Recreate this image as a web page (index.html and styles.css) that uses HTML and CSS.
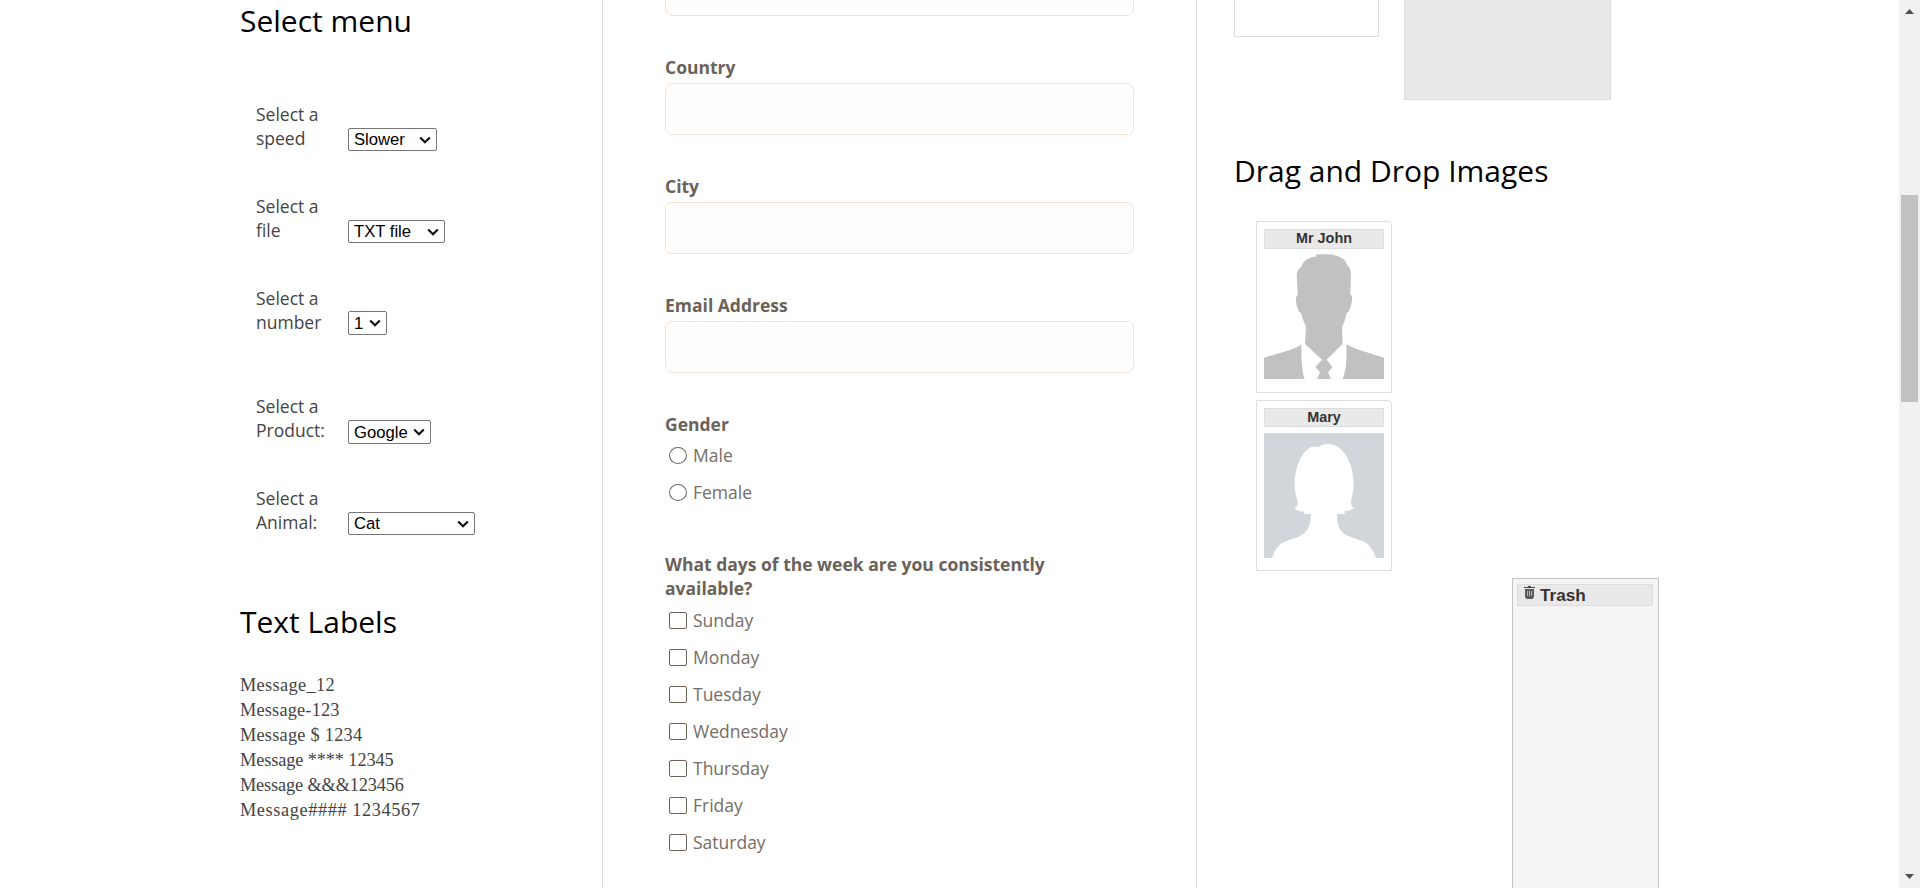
FILE: index.html
```html
<!DOCTYPE html>
<html lang="en">
<head>
<meta charset="utf-8">
<title>Practice form</title>
<link rel="stylesheet" href="styles.css">
</head>
<body>
<div class="page">
  <section class="column column-menus">
    <h2 class="heading">Select menu</h2>
    <div class="menus">
      <div class="menu-row"><label class="menu-label" for="speed">Select a speed</label><select class="menu menu-speed" id="speed"><option>Slower</option></select></div>
      <div class="menu-row"><label class="menu-label" for="file">Select a file</label><select class="menu menu-file" id="file"><option>TXT file</option></select></div>
      <div class="menu-row menu-row-last"><label class="menu-label" for="number">Select a number</label><select class="menu menu-number" id="number"><option>1</option></select></div>
      <div class="menu-row"><label class="menu-label" for="product">Select a Product:</label><select class="menu menu-product" id="product"><option>Google</option></select></div>
      <div class="menu-row"><label class="menu-label" for="animal">Select a Animal:</label><select class="menu menu-animal" id="animal"><option>Cat</option></select></div>
    </div>
    <h2 class="heading">Text Labels</h2>
    <div class="messages">
      <div class="message m1">Message_12</div>
      <div class="message m2">Message-123</div>
      <div class="message m3">Message $ 1234</div>
      <div class="message m4">Message **** 12345</div>
      <div class="message m5">Message &amp;&amp;&amp;123456</div>
      <div class="message m6">Message#### 1234567</div>
    </div>
  </section>

  <section class="column column-form">
    <input class="field field-cut" type="text" aria-label="Address">
    <label class="question">Country<input class="field" type="text"></label>
    <label class="question">City<input class="field" type="text"></label>
    <label class="question">Email Address<input class="field" type="text"></label>
    <div class="question question-gender">Gender
      <div class="choices">
        <label class="choice"><input class="mark mark-radio" type="radio" name="gender">Male</label>
        <label class="choice"><input class="mark mark-radio" type="radio" name="gender">Female</label>
      </div>
    </div>
    <div class="question question-days">What days of the week are you consistently available?
      <div class="choices choices-days">
        <label class="choice"><input class="mark" type="checkbox">Sunday</label>
        <label class="choice"><input class="mark" type="checkbox">Monday</label>
        <label class="choice"><input class="mark" type="checkbox">Tuesday</label>
        <label class="choice"><input class="mark" type="checkbox">Wednesday</label>
        <label class="choice"><input class="mark" type="checkbox">Thursday</label>
        <label class="choice"><input class="mark" type="checkbox">Friday</label>
        <label class="choice"><input class="mark" type="checkbox">Saturday</label>
      </div>
    </div>
  </section>

  <section class="column column-drag">
    <div class="drag-boxes">
      <div class="drag-item"></div>
      <div class="drop-target"></div>
    </div>
    <h2 class="heading heading-images">Drag and Drop Images</h2>
    <div class="gallery">
      <div class="card card-john">
        <h5 class="card-title">Mr John</h5>
        <svg class="portrait" viewBox="0 0 360 378" preserveAspectRatio="none">
          <rect width="360" height="378" fill="#fff"/>
          <path fill="#c1c1c1" d="M0 314 L78 291 Q102 283 112 274 C112 310 112 350 122 378 H0Z M360 314 L284 290 Q260 282 247 273 C249 312 247 352 236 378 H360Z"/>
          <path fill="#c1c1c1" d="M158 8 L154 5 C190 3 215 3 236 17 Q247 24 249 36 Q261 44 261 68 L259 125 Q266 124 264 143 Q259 172 248 181 Q243 204 234 223 L236 272 L188 320 L206 343 L192 358 L201 378 H159 L168 358 L154 341 L174 320 L123 273 L126 223 Q117 202 111 180 Q103 178 98 157 Q92 129 101 126 L98 70 Q98 49 111 43 Q119 15 158 10Z"/>
        </svg>
      </div>
      <div class="card card-mary">
        <h5 class="card-title card-title-mary">Mary</h5>
        <svg class="portrait portrait-mary" viewBox="0 0 360 376" preserveAspectRatio="none">
          <rect width="360" height="376" fill="#d2d6db"/>
          <path fill="#fff" d="M24 376 Q36 338 60 328 L105 311 Q140 299 141 244 L117 244 L122 237 Q107 238 91 228 Q104 217 101 207 Q87 166 94 126 Q102 69 136 45 Q151 38 165 43 Q182 29 207 35 Q243 45 262 103 Q276 154 261 204 Q260 220 270 227 Q255 234 240 236 L244 243 L219 244 Q216 293 248 308 L302 328 Q324 341 336 376Z"/>
        </svg>
      </div>
    </div>
    <div class="trash">
      <h4 class="trash-title">
        <svg class="trash-icon" viewBox="0 0 11 13"><path fill="#4a4a4a" d="M4 0h3v1h4v1H0V1h4z"/><path fill="#5a5a5a" d="M1 3h9v7.500Q9.500 13 8 13H3Q1.500 13 1 10.500z"/><path stroke="#c8c8c8" stroke-width=".8" d="M3.500 5v5M5.500 5v5M7.500 5v5"/></svg>
        <span>Trash</span>
      </h4>
    </div>
  </section>

  <aside class="scrollbar">
    <svg class="arrow" viewBox="0 0 9 5"><path fill="#505050" d="M4.500 0L9 5H0z"/></svg>
    <div class="thumb"></div>
    <svg class="arrow" viewBox="0 0 9 5"><path fill="#505050" d="M0 0h9L4.500 5z"/></svg>
  </aside>
</div>
</body>
</html>
```
FILE: styles.css
```css
* { box-sizing: border-box; }
body { margin: 0; background: #fff; overflow: hidden; font-family: "Open Sans", "Noto Sans", sans-serif; font-size: 17.5px; line-height: 24px; color: #444; }
.page { display: flex; height: 888px; overflow: hidden; }
.column { flex: none; height: 888px; overflow: hidden; }
.heading { margin: 0; font-size: 30px; line-height: 40px; font-weight: 400; color: #000; }

.column-menus { width: 603px; padding: 1px 0 0 240px; border-right: 1px solid #ddd; }
.menus { padding: 61px 0 0 16px; height: 561px; }
.menu-row { display: flex; height: 92px; }
.menu-row-last { height: 108px; }
.menu-label { width: 92px; padding-right: 20px; }
.menu { appearance: none; height: 23px; margin: 26px 0 0; padding: 0 5px; font: 16.67px "Liberation Sans", Arial, sans-serif; color: #000; background: #fff url("data:image/svg+xml,%3Csvg xmlns='http://www.w3.org/2000/svg' viewBox='0 0 12 8'%3E%3Cpath d='M1.200 1.500L6 6.200l4.800-4.700' fill='none' stroke='%23111' stroke-width='2.200'/%3E%3C/svg%3E") no-repeat right 5px center / 12px 8px; border: 1px solid #767676; border-radius: 2px; }
.menu-speed { width: 89px; }
.menu-file { width: 97px; }
.menu-number { width: 39px; height: 24px; margin-top: 25px; }
.menu-product { width: 83px; height: 24px; }
.menu-animal { width: 127px; }
.messages { padding-top: 31px; font-family: "Liberation Serif", Georgia, serif; font-size: 18.3px; line-height: 25px; }
.m1 { letter-spacing: .35px; }
.m2 { letter-spacing: .2px; }
.m3 { letter-spacing: .25px; }
.m4 { letter-spacing: -.1px; }
.m5 { letter-spacing: -.13px; }
.m6 { letter-spacing: .6px; }

.column-form { width: 594px; padding-left: 62px; border-right: 1px solid #ddd; color: #6b625a; }
.field { display: block; width: 469px; height: 52px; margin: 4px 0 0; border: 1px solid #f3e3d7; border-radius: 7px; background: #fffefc; }
.field-cut { margin-top: -36px; margin-bottom: 39px; }
.question { display: block; height: 119px; width: 469px; padding-right: 60px; font-weight: 700; white-space: normal; }
.question-gender { height: 140px; }
.question-days { height: 400px; }
.choices { padding: 7px 0 0 4px; font-weight: 400; color: #756d66; }
.choices-days { padding-top: 8px; }
.choice { display: flex; align-items: center; gap: 6px; height: 24px; margin-bottom: 13px; }
.mark { appearance: none; flex: none; width: 18px; height: 17px; margin: 0; border: 1px solid #6b625a; border-radius: 2px; background: #fff; }
.mark-radio { border-radius: 50%; }

.column-drag { width: 702px; padding-left: 37px; }
.drag-boxes { display: flex; align-items: flex-start; gap: 25px; height: 151px; }
.drag-item { width: 145px; height: 37px; border: 1px solid #ddd; border-top: 0; }
.drop-target { width: 207px; height: 100px; background: #e9e9e9; border: 1px solid #ddd; border-top: 0; }
.gallery { display: flex; flex-direction: column; gap: 7px; padding: 30px 0 0 22px; font-family: "Liberation Sans", Arial, sans-serif; color: #333; }
.card { width: 136px; padding: 7px; border: 1px solid #ddd; border-radius: 1px 4px 1px 1px; }
.card-john { height: 172px; }
.card-mary { height: 171px; }
.card-title { height: 20px; margin: 0 0 4px; border: 1px solid #ddd; background: #e9e9e9; font-size: 14.4px; line-height: 17px; font-weight: 700; text-align: center; }
.card-title-mary { height: 19px; margin-bottom: 6px; }
.portrait { display: block; width: 120px; height: 126px; }
.portrait-mary { height: 125px; }
.trash { width: 147px; height: 320px; margin: 7px 0 0 278px; padding: 5px 5px 5px 4px; border: 1px solid #c5c5c5; background: #f5f5f5; }
.trash-title { display: flex; gap: 5px; height: 22px; margin: 0; padding-left: 6px; border: 1px solid #ddd; background: #e9e9e9; font: 700 17.2px/20px "Liberation Sans", Arial, sans-serif; color: #333; }
.trash-icon { width: 11px; height: 13px; margin-top: 1px; }

.scrollbar { flex: none; display: flex; flex-direction: column; align-items: center; width: 21px; height: 888px; padding: 9px 0; background: #f1f1f1; }
.arrow { flex: none; width: 9px; height: 5px; }
.thumb { width: 17px; height: 207px; margin: 181px 0 auto; background: #c1c1c1; }
```
